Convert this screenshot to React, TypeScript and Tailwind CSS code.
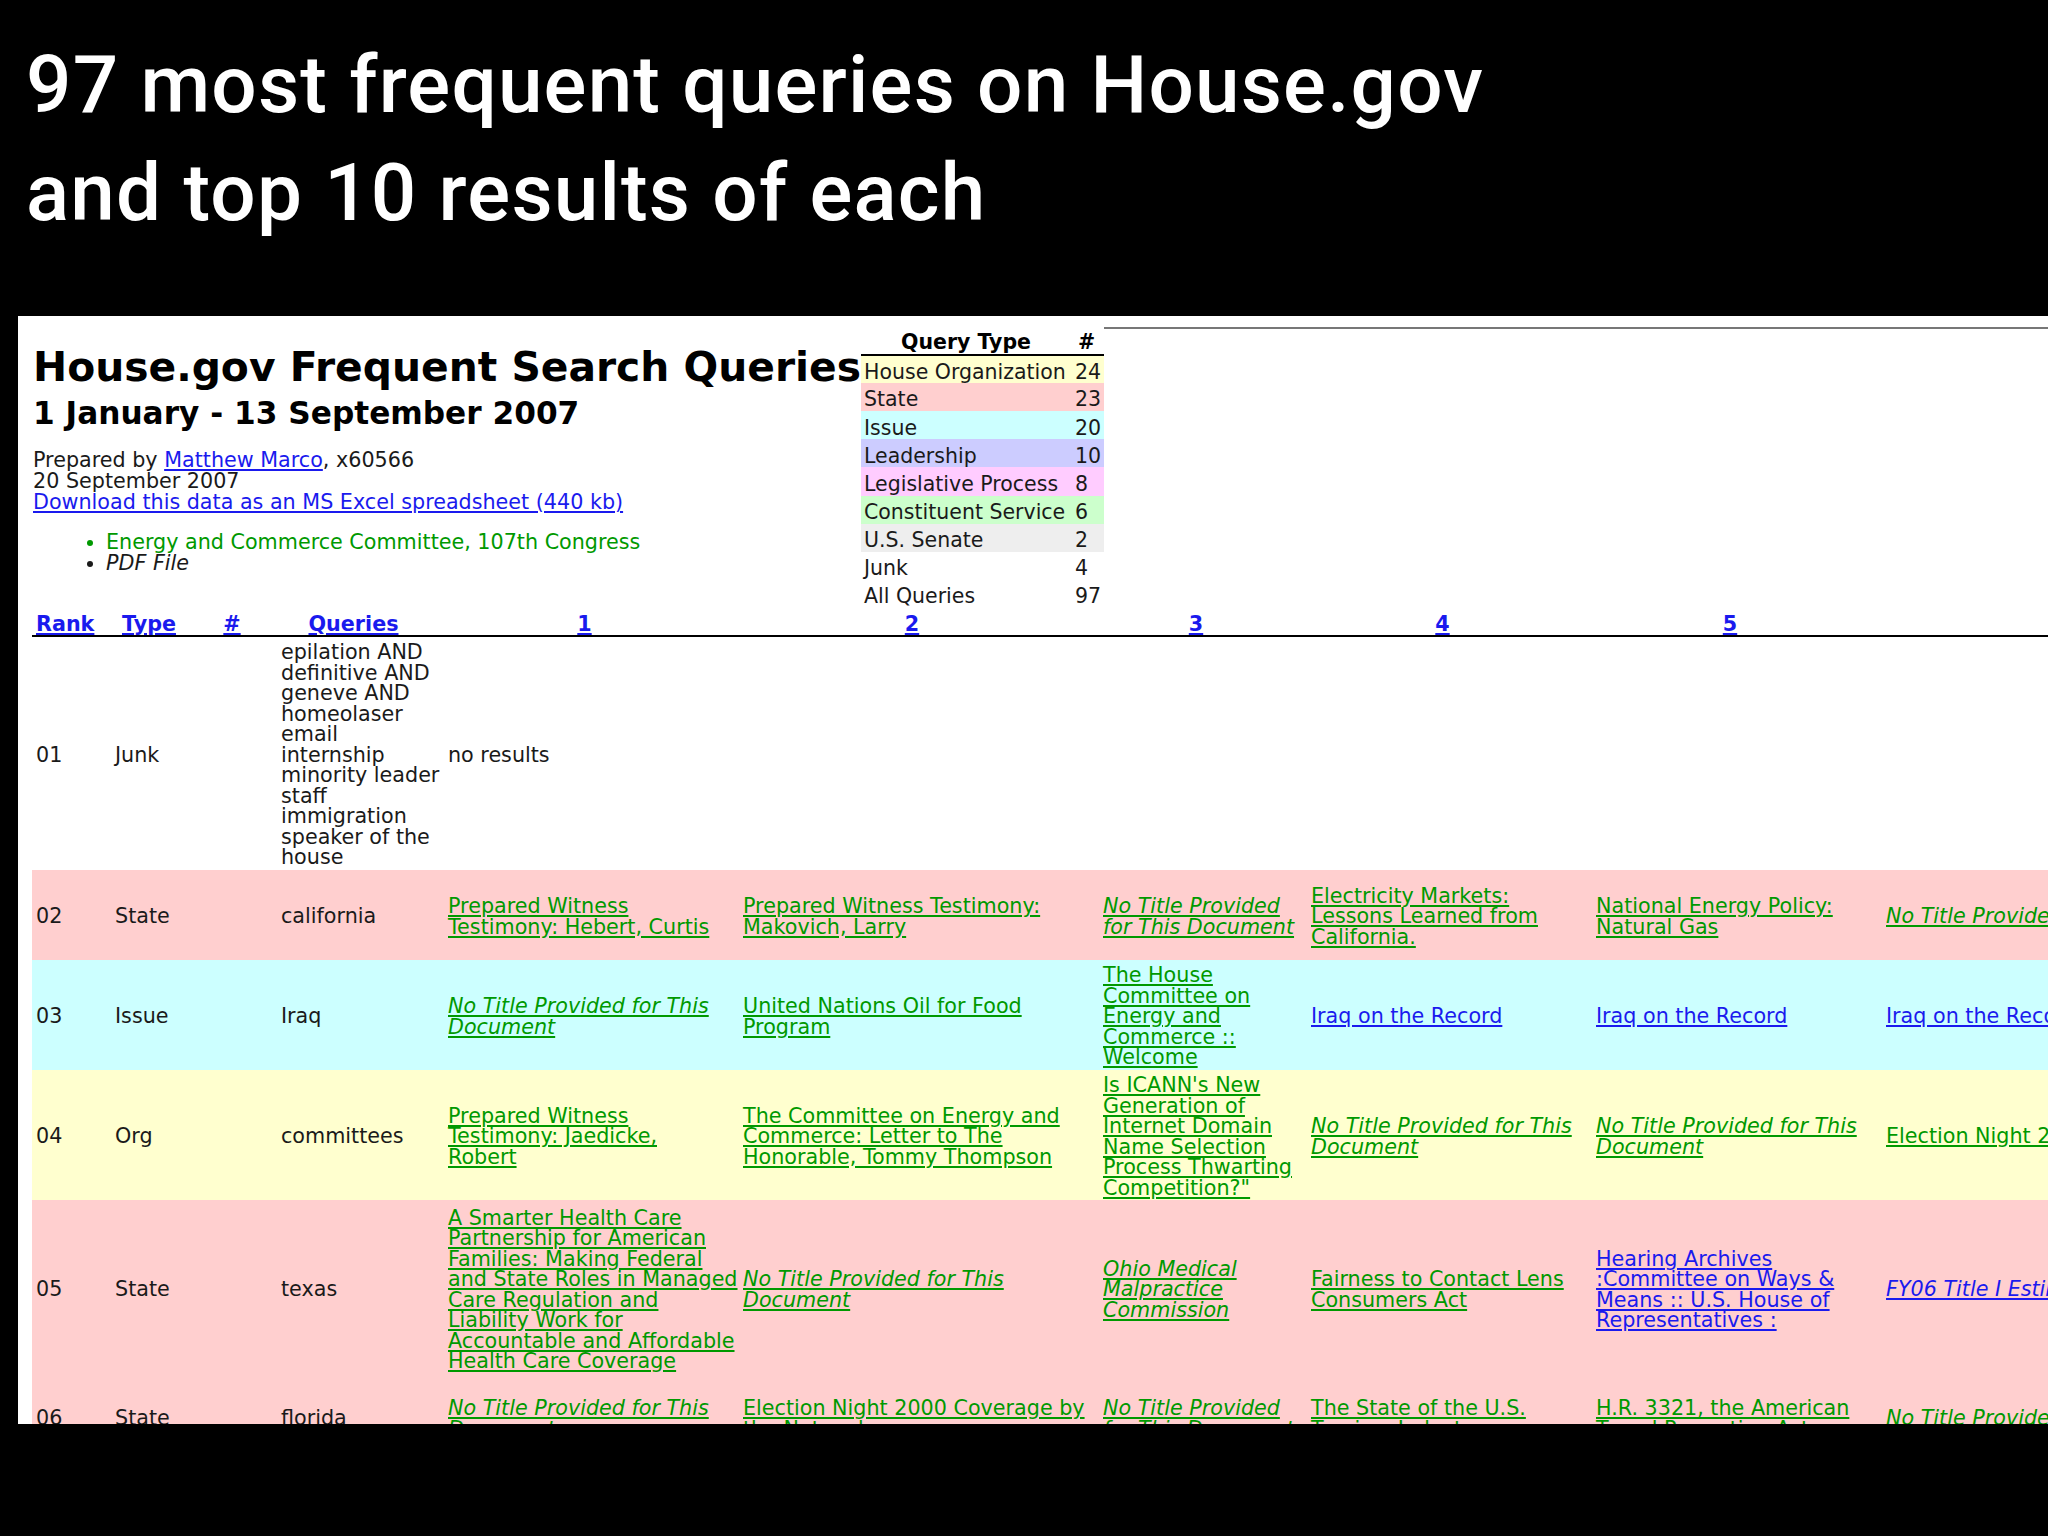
import React from "react";

type Cell = { t: string[]; i?: boolean; b?: boolean };
const g = (...t: string[]): Cell => ({ t });
const gi = (...t: string[]): Cell => ({ t, i: true });
const bl = (...t: string[]): Cell => ({ t, b: true });
const bi = (...t: string[]): Cell => ({ t, b: true, i: true });

const rows: { rank: string; type: string; q: string[]; bg: string; h: string; cells: Cell[] }[] = [
  {
    rank: "02", type: "State", q: ["california"], bg: "bg-[#ffcfcf]", h: "h-[90px]",
    cells: [
      g("Prepared Witness", "Testimony: Hebert, Curtis"),
      g("Prepared Witness Testimony:", "Makovich, Larry"),
      gi("No Title Provided", "for This Document"),
      g("Electricity Markets:", "Lessons Learned from", "California."),
      g("National Energy Policy:", "Natural Gas"),
      gi("No Title Provided for This Document"),
    ],
  },
  {
    rank: "03", type: "Issue", q: ["Iraq"], bg: "bg-[#ccffff]", h: "h-[110px]",
    cells: [
      gi("No Title Provided for This", "Document"),
      g("United Nations Oil for Food", "Program"),
      g("The House", "Committee on", "Energy and", "Commerce ::", "Welcome"),
      bl("Iraq on the Record"),
      bl("Iraq on the Record"),
      bl("Iraq on the Record"),
    ],
  },
  {
    rank: "04", type: "Org", q: ["committees"], bg: "bg-[#ffffcf]", h: "h-[130px]",
    cells: [
      g("Prepared Witness", "Testimony: Jaedicke,", "Robert"),
      g("The Committee on Energy and", "Commerce: Letter to The", "Honorable, Tommy Thompson"),
      g("Is ICANN's New", "Generation of", "Internet Domain", "Name Selection", "Process Thwarting", 'Competition?"'),
      gi("No Title Provided for This", "Document"),
      gi("No Title Provided for This", "Document"),
      g("Election Night 2000 Coverage by"),
    ],
  },
  {
    rank: "05", type: "State", q: ["texas"], bg: "bg-[#ffcfcf]", h: "h-[176px]",
    cells: [
      g("A Smarter Health Care", "Partnership for American", "Families: Making Federal", "and State Roles in Managed", "Care Regulation and", "Liability Work for", "Accountable and Affordable", "Health Care Coverage"),
      gi("No Title Provided for This", "Document"),
      gi("Ohio Medical", "Malpractice", "Commission"),
      g("Fairness to Contact Lens", "Consumers Act"),
      bl("Hearing Archives", ":Committee on Ways &", "Means :: U.S. House of", "Representatives :"),
      bi("FY06 Title I Estimates"),
    ],
  },
  {
    rank: "06", type: "State", q: ["florida"], bg: "bg-[#ffcfcf]", h: "h-[82px]",
    cells: [
      gi("No Title Provided for This", "Document"),
      g("Election Night 2000 Coverage by", "the Networks"),
      gi("No Title Provided", "for This Document"),
      g("The State of the U.S.", "Tourism Industry"),
      g("H.R. 3321, the American", "Travel Promotion Act"),
      gi("No Title Provided for This Document"),
    ],
  },
];

const types: [string, string, string][] = [
  ["House Organization", "24", "bg-[#ffffcf]"],
  ["State", "23", "bg-[#ffcfcf]"],
  ["Issue", "20", "bg-[#ccffff]"],
  ["Leadership", "10", "bg-[#ccccff]"],
  ["Legislative Process", "8", "bg-[#ffccff]"],
  ["Constituent Service", "6", "bg-[#ccffcc]"],
  ["U.S. Senate", "2", "bg-[#eeeeee]"],
  ["Junk", "4", "bg-white"],
  ["All Queries", "97", "bg-white"],
];

const heads = ["Rank", "Type", "#", "Queries", "1", "2", "3", "4", "5", "6"];
const junk = ["epilation AND", "definitive AND", "geneve AND", "homeolaser", "email", "internship", "minority leader", "staff", "immigration", "speaker of the", "house"];

function Lines({ t }: { t: string[] }) {
  return (
    <>
      {t.map((l, i) => (
        <React.Fragment key={i}>
          {i > 0 && <br />}
          {l}
        </React.Fragment>
      ))}
    </>
  );
}

export default function App() {
  return (
    <div className="h-[1536px] w-[2048px] overflow-hidden bg-black font-['DejaVu_Sans','Liberation_Sans',sans-serif]">
      <div className="h-[316px] pl-[26px] pt-[31px] font-['Roboto','Liberation_Sans',sans-serif] text-[80px] font-medium leading-[108px] tracking-[1.2px] text-white">
        <div>97 most frequent queries on House.gov</div>
        <div>and top 10 results of each</div>
      </div>
      <div className="ml-[18px] h-[1108px] overflow-hidden bg-white pl-[14px] text-[20.7px] leading-[20.5px] text-[#1a1a1a]">
        <div className="flex h-[292px]">
          <div className="w-[829px] shrink-0 pl-px">
            <h1 className="whitespace-nowrap pt-[29px] text-[40.8px] font-bold leading-[44px] text-black">House.gov Frequent Search Queries</h1>
            <h2 className="pt-[3px] text-[31.2px] font-bold leading-[42px] text-black">1 January - 13 September 2007</h2>
            <div className="pt-[16px] leading-[21px]">
              Prepared by <a className="text-[#1a1aee] underline">Matthew Marco</a>, x60566
              <br />
              20 September 2007
              <br />
              <a className="text-[#1a1aee] underline">Download this data as an MS Excel spreadsheet (440 kb)</a>
            </div>
            <ul className="list-disc pl-[73px] pt-[19px] leading-[21px]">
              <li className="text-[#009900]">Energy and Commerce Committee, 107th Congress</li>
              <li className="italic">PDF File</li>
            </ul>
          </div>
          <table className="h-[292px] w-[243px] shrink-0 border-collapse">
            <thead>
              <tr className="h-[39px] border-b-2 border-black align-bottom">
                <th className="pb-[2px] pr-[4px] text-center text-[20.5px] font-bold text-black">Query Type</th>
                <th className="pb-[2px] pl-[3px] text-left text-[20.5px] font-bold text-black">#</th>
              </tr>
            </thead>
            <tbody>
              {types.map(([n, c, bg]) => (
                <tr key={n} className={`h-[27.6px] ${bg}`}>
                  <td className="whitespace-nowrap pl-[3px] pr-[2px] pt-[5px] text-[20.5px]">{n}</td>
                  <td className="whitespace-nowrap pr-[2px] pt-[5px] text-[20.5px]">{c}</td>
                </tr>
              ))}
            </tbody>
          </table>
          <div className="mt-[11px] h-[2px] flex-1 bg-[#777]" />
        </div>
        <table className="w-[2500px] table-fixed border-collapse">
          <colgroup>
            <col className="w-[78px]" />
            <col className="w-[90px]" />
            <col className="w-[76px]" />
            <col className="w-[167px]" />
            <col className="w-[295px]" />
            <col className="w-[360px]" />
            <col className="w-[208px]" />
            <col className="w-[285px]" />
            <col className="w-[290px]" />
            <col className="w-[651px]" />
          </colgroup>
          <thead>
            <tr className="h-[28px] border-b-2 border-black">
              {heads.map((h) => (
                <th key={h} className="pb-[1px] pl-[4px] pr-[16px] text-center align-bottom font-bold">
                  <a className="text-[#1a1aee] underline">{h}</a>
                </th>
              ))}
            </tr>
          </thead>
          <tbody>
            <tr className="h-[234px]">
              <td className="pl-[4px] pt-[3px]">01</td>
              <td className="pl-[5px] pt-[3px]">Junk</td>
              <td />
              <td className="whitespace-nowrap pl-[5px] pt-[3px]">
                <Lines t={junk} />
              </td>
              <td className="pl-[5px] pt-[3px]" colSpan={6}>
                no results
              </td>
            </tr>
            {rows.map((r) => (
              <tr key={r.rank} className={`${r.h} ${r.bg}`}>
                <td className="pl-[4px] pt-[2px]">{r.rank}</td>
                <td className="pl-[5px] pt-[2px]">{r.type}</td>
                <td />
                <td className="whitespace-nowrap pl-[5px] pt-[2px]">
                  <Lines t={r.q} />
                </td>
                {r.cells.map((c, i) => (
                  <td
                    key={i}
                    className={`whitespace-nowrap pl-[5px] pt-[3px] underline ${c.b ? "text-[#1a1aee]" : "text-[#009900]"} ${c.i ? "italic" : ""}`}
                  >
                    <Lines t={c.t} />
                  </td>
                ))}
              </tr>
            ))}
          </tbody>
        </table>
      </div>
    </div>
  );
}
